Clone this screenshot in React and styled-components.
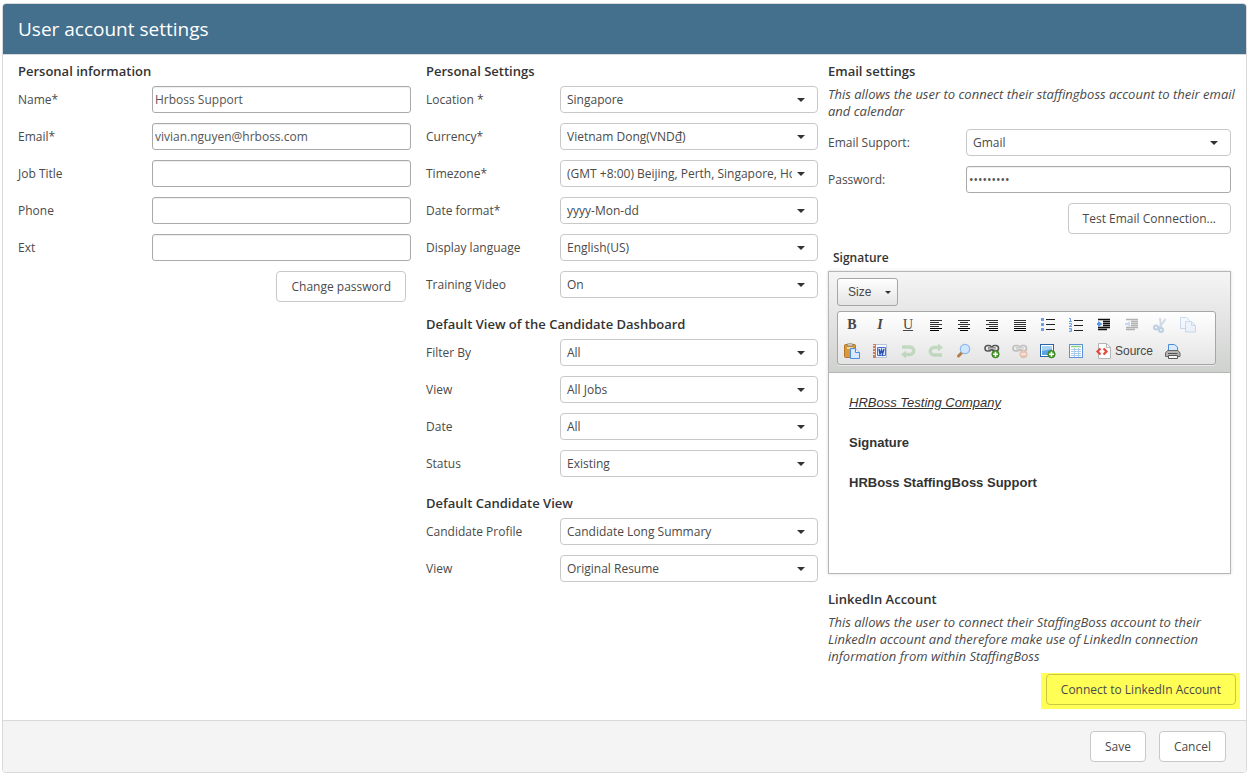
import React from "react";
import styled, { createGlobalStyle } from "styled-components";

const GlobalStyle = createGlobalStyle`
  *, *::before, *::after { box-sizing: border-box; }
  body {
    margin: 0;
    background: #fff;
    color: #4a4a4a;
    font: 12px/17px "Open Sans", "Noto Sans", sans-serif;
  }
  button, input, select { font: inherit; color: inherit; }
`;

const Card = styled.form`
  margin: 3px 2px;
  border: 1px solid #d9d9d9;
  border-radius: 4px;
  overflow: hidden;
`;

const Header = styled.header`
  padding: 11px 15px;
  background: #446f8d;
  border-bottom: 1px solid #d9d9d9;
`;

const Title = styled.h1`
  margin: 0;
  color: #fff;
  font-size: 19px;
  line-height: 28px;
  font-weight: 400;
`;

const Columns = styled.div`
  display: grid;
  grid-template-columns: 408fr 402fr 403fr;
  padding: 7px 15px 11px;
`;

const Column = styled.div`
  min-width: 0;
  padding-right: ${(p) => p.$gutter || 0}px;
`;

const Section = styled.section`
  display: flex;
  flex-direction: column;
  margin-bottom: 17px;
  &:last-child { margin-bottom: 0; }
`;

const Heading = styled.h2`
  margin: 0 0 6px;
  color: #333;
  font-size: 13px;
  line-height: 18px;
  font-weight: 600;
`;

const Hint = styled.p`
  margin: 0 -8px 9px 0;
  font-size: 13px;
  font-style: italic;
`;

const Row = styled.div`
  display: grid;
  grid-template-columns: ${(p) => p.$label || 134}px 1fr;
  align-items: center;
  margin-bottom: 10px;
  ${Section} > &:last-child { margin-bottom: 0; }
`;

const TextInput = styled.input`
  width: 100%;
  min-width: 0;
  height: 27px;
  padding: 0 2px;
  border: 1px solid #aaa;
  border-radius: 3px;
  background: #fff;
  color: #555;
  box-shadow: inset 0 1px 1px #eee;
`;

const SelectBox = styled.div`
  display: grid;
  min-width: 0;
  align-items: center;
  > * { grid-area: 1 / 1; }
  > svg { justify-self: end; margin-right: 13px; pointer-events: none; }
`;

const NativeSelect = styled.select`
  appearance: none;
  width: 100%;
  min-width: 0;
  height: 27px;
  padding: 0 25px 0 6px;
  border: 1px solid #c8c8c8;
  border-radius: 4px;
  background: #fff;
`;

const Button = styled.button`
  height: 31px;
  padding: 0 14px;
  border: 1px solid ${(p) => (p.$clear ? "#c8c843" : "#c8c8c8")};
  border-radius: 4px;
  background: ${(p) => (p.$clear ? "transparent" : "#fff")};
  white-space: nowrap;
`;

const Actions = styled.div`
  display: flex;
  justify-content: flex-end;
  padding-right: ${(p) => p.$inset || 0}px;
`;

const Highlight = styled.div`
  align-self: flex-end;
  margin: -1px -9px 0 0;
  padding: 1px 4px 4px 5px;
  background: #ffff55;
`;

const EditorLabel = styled.h3`
  margin: 15px 5px 4px;
  color: #333;
  font-size: 12px;
  line-height: 18px;
  font-weight: 600;
`;

const Editor = styled.div`
  margin-bottom: 16px;
  border: 1px solid #b6b6b6;
  box-shadow: 0 0 3px rgba(0, 0, 0, 0.15);
  font-family: "Liberation Sans", Arial, sans-serif;
`;

const Toolbar = styled.div`
  display: flex;
  flex-direction: column;
  align-items: flex-start;
  gap: 5px;
  padding: 6px 8px 7px;
  border-bottom: 1px solid #b6b6b6;
  background: linear-gradient(#f5f5f5, #cfd1cf);
`;

const SizeButton = styled.button`
  display: flex;
  align-items: center;
  justify-content: space-between;
  width: 61px;
  height: 28px;
  padding: 0 6px 0 10px;
  border: 1px solid #a6a6a6;
  border-radius: 3px;
  background: linear-gradient(#fff, #e4e4e4);
  color: #474747;
`;

const ToolGroup = styled.div`
  width: 379px;
  max-width: 100%;
  border: 1px solid #a6a6a6;
  border-radius: 3px;
  background: linear-gradient(#fff, #e4e4e4);
  box-shadow: 0 1px 0 rgba(255, 255, 255, 0.5);
`;

const ToolRow = styled.div`
  display: flex;
`;

const Tool = styled.button`
  display: flex;
  align-items: center;
  gap: 3px;
  height: 26px;
  padding: 0 6px;
  border: 0;
  background: none;
  color: #474747;
  opacity: ${(p) => (p.disabled ? 0.3 : 1)};
`;

const Letter = styled.span`
  width: 16px;
  text-align: center;
  font: ${(p) => p.$kind} 14px/16px "Liberation Serif", serif;
  text-decoration: ${(p) => (p.$line ? "underline" : "none")};
`;

const Page = styled.div`
  min-height: 200px;
  padding: 20px;
  color: #333;
  font-size: 13px;
  line-height: 20px;
  p { margin: 0 0 20px; }
`;

const Footer = styled.footer`
  display: flex;
  justify-content: flex-end;
  gap: 13px;
  padding: 10px 20px;
  border-top: 1px solid #d9d9d9;
  background: #f4f4f4;
`;

const Caret = ({ small }) => (
  <svg width={small ? 6 : 8} height={small ? 3 : 4} viewBox="0 0 8 4" aria-hidden="true">
    <path d="M0 0h8L4 4z" fill="#333" />
  </svg>
);

function Field({ id, label, labelWidth, type = "text", value = "" }) {
  return (
    <Row $label={labelWidth}>
      <label htmlFor={id}>{label}</label>
      <TextInput id={id} type={type} defaultValue={value} />
    </Row>
  );
}

function Choice({ id, label, labelWidth, value }) {
  return (
    <Row $label={labelWidth}>
      <label htmlFor={id}>{label}</label>
      <SelectBox>
        <NativeSelect id={id} defaultValue={value}>
          <option>{value}</option>
        </NativeSelect>
        <Caret />
      </SelectBox>
    </Row>
  );
}

const Icon = ({ children }) => (
  <svg width="16" height="16" viewBox="0 0 16 16" fill="none" aria-hidden="true">
    {children}
  </svg>
);

const Lines = ({ rows }) => (
  <Icon>
    {rows.map(([x, w], i) => (
      <path key={i} d={`M${x} ${3.5 + i * 2}h${w}`} stroke={i > 3 ? "#000" : "#333"} />
    ))}
  </Icon>
);

const Indent = ({ out }) => (
  <Icon>
    <path d="M2 2.5h12M7 4.5h7M7 6.5h7M7 8.5h7M2 10.5h12M2 12.5h9" stroke="#111" strokeWidth="1.3" />
    <path d={out ? "M6 4v6L1.500 7z" : "M2 4v6l4.500-3z"} fill="#5b93e0" />
    <path d={out ? "M1 7h5" : "M1 7h4"} stroke="#5b93e0" strokeWidth="2" />
  </Icon>
);

const Chain = () => (
  <>
    <rect x="1" y="2.500" width="6.500" height="5.500" rx="2.700" fill="#eee" stroke="#555" strokeWidth="1.600" />
    <rect x="8" y="2.500" width="6.500" height="5.500" rx="2.700" fill="#eee" stroke="#555" strokeWidth="1.600" />
    <path d="M4 5.300h7.500" stroke="#666" strokeWidth="2.400" />
    <path d="M4.500 5.200h6.500" stroke="#ddd" />
  </>
);

const Badge = ({ minus }) => (
  <>
    <circle cx="11.500" cy="11.200" r="3.700" fill={minus ? "#ee7440" : "#4c9b2e"} stroke={minus ? "#c9501f" : "#2f7517"} strokeWidth=".7" />
    <path d={minus ? "M9 11.200h5" : "M9 11.200h5M11.500 8.700v5"} stroke="#fff" strokeWidth="1.500" />
  </>
);

const topTools = [
  ["Bold", <Letter $kind="bold">B</Letter>],
  ["Italic", <Letter $kind="italic bold">I</Letter>],
  ["Underline", <Letter $kind="normal" $line>U</Letter>],
  ["Align left", <Lines rows={[[2, 12], [2, 9], [2, 12], [2, 9], [2, 12], [2, 9]]} />],
  ["Center", <Lines rows={[[2, 12], [4, 8], [2, 12], [4, 8], [2, 12], [4, 8]]} />],
  ["Align right", <Lines rows={[[2, 12], [5, 9], [2, 12], [5, 9], [2, 12], [5, 9]]} />],
  ["Justify", <Lines rows={[[2, 12], [2, 12], [2, 12], [2, 12], [2, 12], [2, 12]]} />],
  ["Bulleted list", (
    <Icon>
      <path d="M1 1h3v3H1zM1 6h3v3H1zM1 11h3v3H1z" fill="#6b9fe8" />
      <path d="M6 2.500h9M6 7.500h9M6 12.500h9" stroke="#222" />
    </Icon>
  )],
  ["Numbered list", (
    <Icon>
      <path d="M1 1.500h1.500v3M1 4.500h3M1 6.500h2.500v1.500L1 9.500h3M1 11.500h2.500v3H1M1.500 13h2" stroke="#6b9fe8" />
      <path d="M6 3.500h9M6 8.500h9M6 13.500h9" stroke="#222" />
    </Icon>
  )],
  ["Increase indent", <Indent />],
  ["Decrease indent", <Indent out />, true],
  ["Cut", (
    <Icon>
      <path d="M8 1l1 9M13.500 2L7 11" stroke="#6f94b8" strokeWidth="2" />
      <circle cx="4" cy="10.500" r="2" stroke="#3975b8" strokeWidth="2" />
      <circle cx="9" cy="13" r="2" stroke="#3975b8" strokeWidth="2" />
    </Icon>
  ), true],
  ["Copy", (
    <Icon>
      <path d="M.5 .5h6l3 3v8h-9z" fill="#e6f1ff" stroke="#5f93d2" />
      <path d="M5.500 4.500h6l4 4v6.500h-10z" fill="#d6e8ff" stroke="#5f93d2" />
      <path d="M11.500 4.500v4h4" stroke="#5f93d2" />
    </Icon>
  ), true],
];

const bottomTools = [
  ["Paste", (
    <Icon>
      <rect x=".5" y="1.500" width="11" height="13" rx="1" fill="#d99a3e" stroke="#b47528" />
      <path d="M3 4h6v2H3z" fill="#f3d79c" />
      <path d="M3 3V1h1.500l1-1h1l1 1H9v2z" fill="#d8d1c2" stroke="#776647" strokeWidth=".6" />
      <path d="M6.500 5.500h5l4 4v6h-9z" fill="#d6e9ff" stroke="#4e8bdc" />
      <path d="M11.500 5.500v4h4" fill="#fff" stroke="#4e8bdc" />
    </Icon>
  )],
  ["Paste from Word", (
    <Icon>
      <path d="M3.500 1.500h11v13h-11z" fill="#f5f8fc" stroke="#b9c3d3" />
      <path d="M1 1h3v14H1z" fill="#c98062" />
      <path d="M1 2.500h2M1 5.500h2M1 8.500h2M1 11.500h2" stroke="#f2d8ca" />
      <path d="M5.500 4.500h8v8h-8z" fill="#dce7fb" stroke="#4a70cc" />
      <path d="M7 6l1 5 1.500-4 1 4 1.500-5" stroke="#2850b8" strokeWidth="1.400" />
    </Icon>
  )],
  ["Undo", (
    <Icon>
      <path d="M2 4h8a3.500 3.500 0 0 1 0 7.500H5" stroke="#5fae5f" strokeWidth="3.400" />
      <path d="M6 7.500v8L1 11.500z" fill="#5fae5f" />
    </Icon>
  ), true],
  ["Redo", (
    <Icon>
      <path d="M11 4.500H6a3.500 3.500 0 0 0 0 7.500h8" stroke="#5fae5f" strokeWidth="3.400" />
      <path d="M10 .5v8l5-4z" fill="#5fae5f" />
    </Icon>
  ), true],
  ["Find", (
    <Icon>
      <path d="M6 9.500L2.500 13" stroke="#b97a42" strokeWidth="3" strokeLinecap="round" />
      <circle cx="9" cy="6" r="4.700" fill="#cfe6ff" stroke="#8fb9ea" strokeWidth="1.200" />
    </Icon>
  )],
  ["Link", <Icon><Chain /><Badge /></Icon>],
  ["Unlink", <Icon><Chain /><Badge minus /></Icon>, true],
  ["Image", (
    <Icon>
      <rect x=".5" y="1.500" width="13" height="12" fill="#fff" stroke="#2c62a8" />
      <path d="M2 3h10v9H2z" fill="#5ba4e0" />
      <path d="M2 3h10v3L2 8z" fill="#a5d2f5" />
      <Badge />
    </Icon>
  )],
  ["Table", (
    <Icon>
      <rect x="1.500" y="1.500" width="13" height="13" fill="#fff" stroke="#5a93d6" />
      <path d="M3 3.500h10" stroke="#8fce83" strokeWidth="1.500" />
      <path d="M3 6.500h10M3 8.500h10M3 10.500h10M3 12.500h10M6.500 5v9M10.500 5v9" stroke="#a9c9ee" />
    </Icon>
  )],
  ["Source", (
    <>
      <Icon>
        <path d="M2.500 .5h8l4 4v11h-12z" fill="#fff" stroke="#b5b5b5" />
        <path d="M10.500 .5v4h4" stroke="#b5b5b5" />
        <path d="M4.500 5.500L1.500 8.500l3 3M7.500 5.500l3 3-3 3" stroke="#e8453c" strokeWidth="2.200" />
      </Icon>
      <span>Source</span>
    </>
  )],
  ["Print", (
    <Icon>
      <path d="M3.500 8V1.500h6l3 2.500v4z" fill="#d8eaff" stroke="#4e8bdc" />
      <path d="M2.500 7.500h10.500l2 2.500v3.500H.5V10z" fill="#b5b5b5" stroke="#666" />
      <path d="M3 10.500h9.500" stroke="#555" />
      <path d="M3.500 12.500h9v3h-9z" fill="#f8f8f8" stroke="#555" />
    </Icon>
  )],
];

const Tools = ({ items }) => (
  <ToolRow>
    {items.map(([name, art, off]) => (
      <Tool key={name} type="button" aria-label={name} disabled={off}>{art}</Tool>
    ))}
  </ToolRow>
);

export default function App() {
  return (
    <>
      <GlobalStyle />
      <Card onSubmit={(e) => e.preventDefault()}>
        <Header><Title>User account settings</Title></Header>
        <Columns>
          <Column $gutter={15}>
            <Section>
              <Heading>Personal information</Heading>
              <Field id="name" label="Name*" value="Hrboss Support" />
              <Field id="email" label="Email*" value="vivian.nguyen@hrboss.com" />
              <Field id="job" label="Job Title" />
              <Field id="phone" label="Phone" />
              <Field id="ext" label="Ext" />
              <Actions $inset={5}><Button type="button">Change password</Button></Actions>
            </Section>
          </Column>
          <Column $gutter={10}>
            <Section>
              <Heading>Personal Settings</Heading>
              <Choice id="location" label="Location *" value="Singapore" />
              <Choice id="currency" label="Currency*" value="Vietnam Dong(VND₫)" />
              <Choice id="timezone" label="Timezone*" value="(GMT +8:00) Beijing, Perth, Singapore, Hong Kong" />
              <Choice id="date-format" label="Date format*" value="yyyy-Mon-dd" />
              <Choice id="language" label="Display language" value="English(US)" />
              <Choice id="training" label="Training Video" value="On" />
            </Section>
            <Section>
              <Heading>Default View of the Candidate Dashboard</Heading>
              <Choice id="filter" label="Filter By" value="All" />
              <Choice id="jobs-view" label="View" value="All Jobs" />
              <Choice id="date" label="Date" value="All" />
              <Choice id="status" label="Status" value="Existing" />
            </Section>
            <Section>
              <Heading>Default Candidate View</Heading>
              <Choice id="profile" label="Candidate Profile" value="Candidate Long Summary" />
              <Choice id="resume-view" label="View" value="Original Resume" />
            </Section>
          </Column>
          <Column>
            <Section>
              <Heading>Email settings</Heading>
              <Hint>This allows the user to connect their staffingboss account to their email and calendar</Hint>
              <Choice id="support" label="Email Support:" labelWidth={138} value="Gmail" />
              <Field id="password" label="Password:" labelWidth={138} type="password" value="password1" />
              <Actions><Button type="button">Test Email Connection...</Button></Actions>
              <EditorLabel id="signature-label">Signature</EditorLabel>
              <Editor>
                <Toolbar>
                  <SizeButton type="button">Size<Caret small /></SizeButton>
                  <ToolGroup>
                    <Tools items={topTools} />
                    <Tools items={bottomTools} />
                  </ToolGroup>
                </Toolbar>
                <Page role="textbox" aria-multiline="true" aria-labelledby="signature-label" contentEditable suppressContentEditableWarning>
                  <p><u><i>HRBoss Testing Company</i></u></p>
                  <p><b>Signature</b></p>
                  <p><b>HRBoss StaffingBoss Support</b></p>
                </Page>
              </Editor>
              <Heading>LinkedIn Account</Heading>
              <Hint>This allows the user to connect their StaffingBoss account to their LinkedIn account and therefore make use of LinkedIn connection information from within StaffingBoss</Hint>
              <Highlight><Button type="button" $clear>Connect to LinkedIn Account</Button></Highlight>
            </Section>
          </Column>
        </Columns>
        <Footer>
          <Button type="submit">Save</Button>
          <Button type="button">Cancel</Button>
        </Footer>
      </Card>
    </>
  );
}
